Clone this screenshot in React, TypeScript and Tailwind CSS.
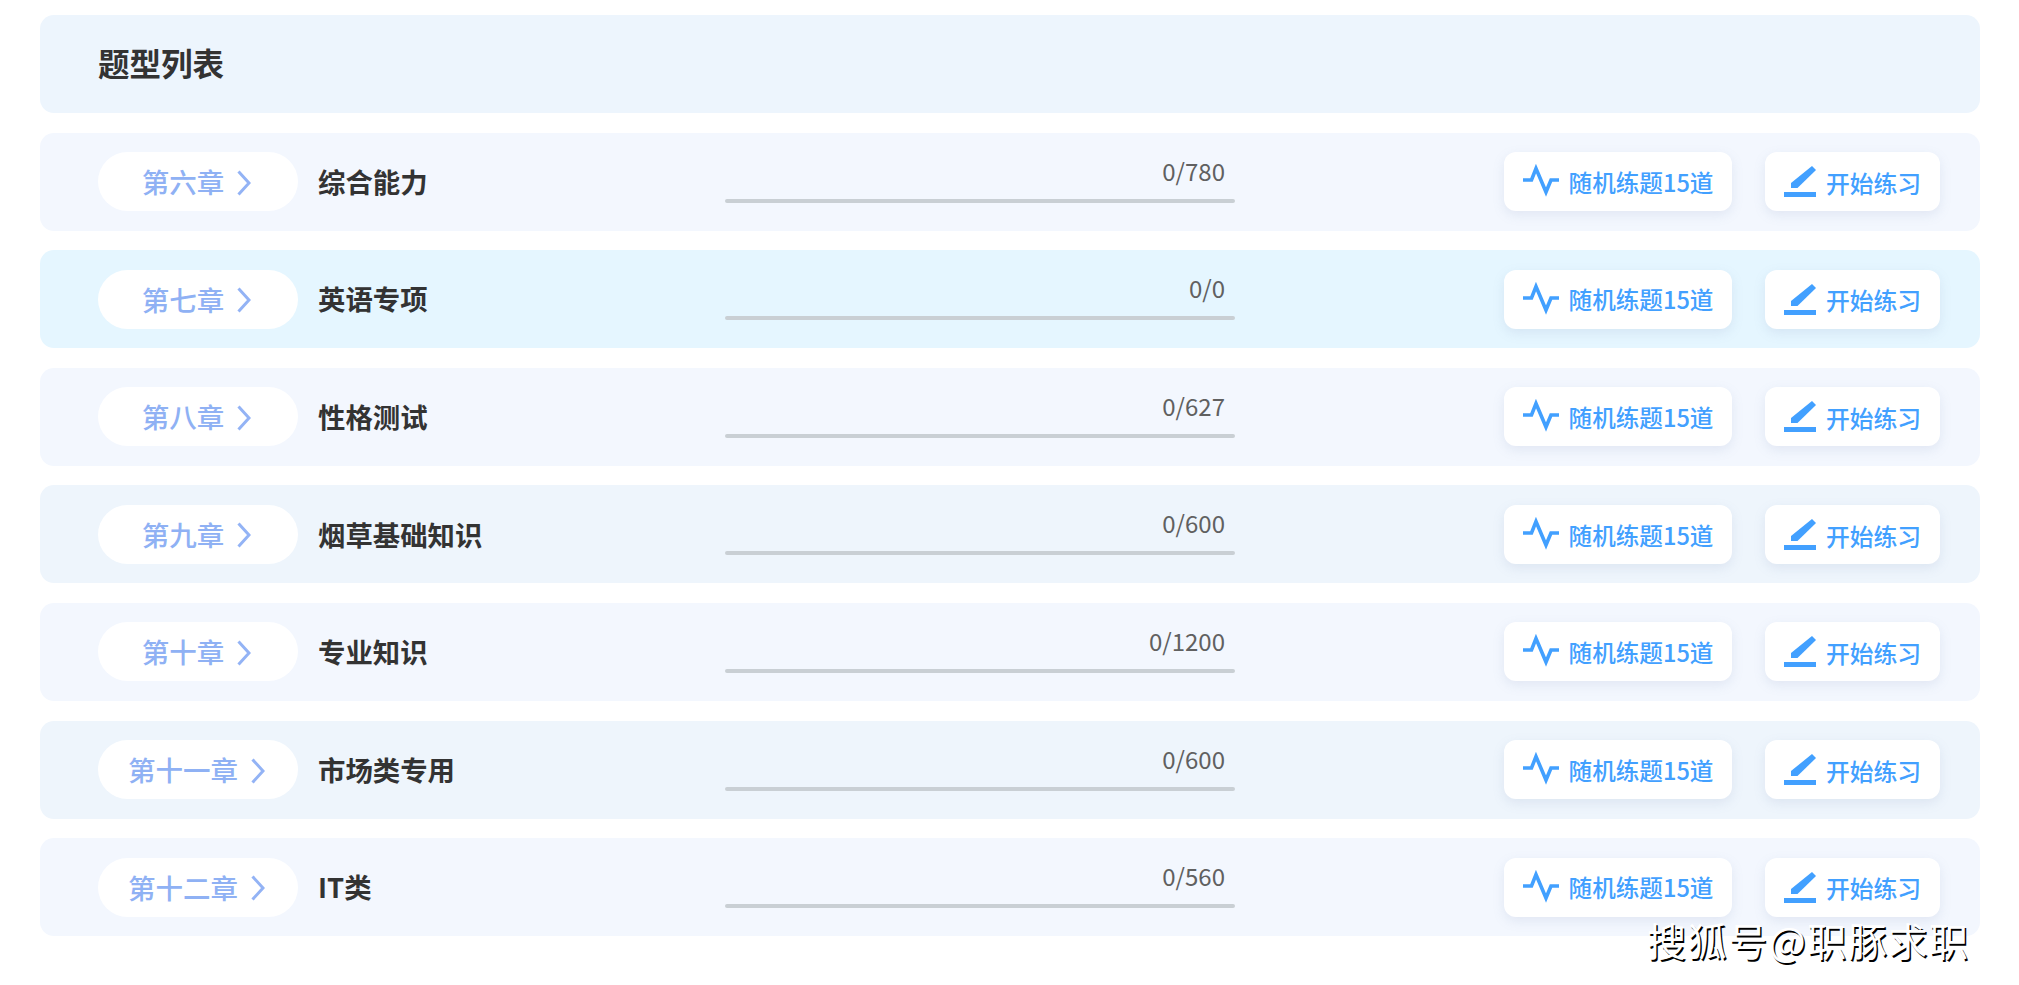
type Chapter = {
  label: string;
  title: string;
  progress: string;
  bg: string;
};

const chapters: Chapter[] = [
  { label: "第六章", title: "综合能力", progress: "0/780", bg: "bg-[#f3f7fe]" },
  { label: "第七章", title: "英语专项", progress: "0/0", bg: "bg-[#e5f6ff]" },
  { label: "第八章", title: "性格测试", progress: "0/627", bg: "bg-[#f3f7fe]" },
  { label: "第九章", title: "烟草基础知识", progress: "0/600", bg: "bg-[#eef5fc]" },
  { label: "第十章", title: "专业知识", progress: "0/1200", bg: "bg-[#f3f7fe]" },
  { label: "第十一章", title: "市场类专用", progress: "0/600", bg: "bg-[#eef5fc]" },
  { label: "第十二章", title: "IT类", progress: "0/560", bg: "bg-[#f3f7fe]" },
];

const PulseIcon = () => (
  <svg width="36" height="30" viewBox="0 0 36 30" fill="none" className="mb-[3px] shrink-0 overflow-visible">
    <path d="M0 15H8.5L13 3.5L23 27L28 15H36" stroke="#42a0ff" strokeWidth="3.6" />
  </svg>
);

const PenIcon = () => (
  <svg width="32" height="31" viewBox="0 0 32 31" className="shrink-0">
    <path d="M7 17L28 0L32 4L13.5 22H7Z" fill="#42a0ff" />
    <rect x="0" y="26" width="32" height="5" fill="#42a0ff" />
  </svg>
);

const Chevron = () => (
  <svg width="14" height="26" viewBox="0 0 14 26" fill="none" className="mt-[2px] shrink-0">
    <path d="M1.5 1.5L12 13L1.5 24.5" stroke="#93b3f5" strokeWidth="3" />
  </svg>
);

const ChapterRow = ({ label, title, progress, bg }: Chapter) => (
  <div className={`flex h-[98px] items-center rounded-[14px] pl-[58px] pr-[40px] ${bg}`}>
    <div className="flex h-[59px] w-[200px] shrink-0 items-center justify-center gap-[13px] rounded-[30px] bg-white pr-[3px] text-[27.5px] font-medium text-[#8fb1f4]">
      <span>{label}</span>
      <Chevron />
    </div>
    <div className="ml-[20px] w-[407px] shrink-0 text-[27.4px] leading-none font-bold text-[#333333]">
      {title}
    </div>
    <div className="mb-[8px] flex w-[510px] shrink-0 flex-col">
      <div className="pr-[10px] text-right text-[24px] leading-[36px] text-[#606060]">{progress}</div>
      <div className="mt-[10px] h-[4px] rounded-full bg-[#c9cfd4]" />
    </div>
    <div className="ml-auto flex h-[59px] w-[228px] shrink-0 items-center justify-center gap-[10px] rounded-[12px] bg-white text-[23.6px] font-medium text-[#42a0ff] shadow-[0_4px_12px_rgba(120,140,180,0.15)]">
      <PulseIcon />
      <span className="mt-[2px]">随机练题15道</span>
    </div>
    <div className="ml-[33px] flex h-[59px] w-[175px] shrink-0 items-center justify-center gap-[10px] rounded-[12px] bg-white text-[23.8px] font-medium text-[#42a0ff] shadow-[0_4px_12px_rgba(120,140,180,0.15)]">
      <PenIcon />
      <span className="mt-[2px]">开始练习</span>
    </div>
  </div>
);

export default function App() {
  return (
    <div className="relative h-[985px] overflow-hidden bg-white font-['Noto_Sans_CJK_SC','Noto_Sans',sans-serif]">
      <div className="flex flex-col gap-[19.6px] pl-[40px] pr-[39px] pt-[15px]">
        <div className="flex h-[98px] items-center rounded-[14px] bg-[#edf5fd] pb-[3px] pl-[58px] text-[31.5px] font-bold text-[#333333]">
          题型列表
        </div>
        {chapters.map((chapter) => (
          <ChapterRow key={chapter.label} {...chapter} />
        ))}
      </div>
      <div className="absolute top-[910px] left-[1647px] text-[39px] leading-[58px] tracking-[1.6px] text-white [text-shadow:1.5px_1.5px_0_#000]">
        搜狐号@职豚求职
      </div>
    </div>
  );
}
